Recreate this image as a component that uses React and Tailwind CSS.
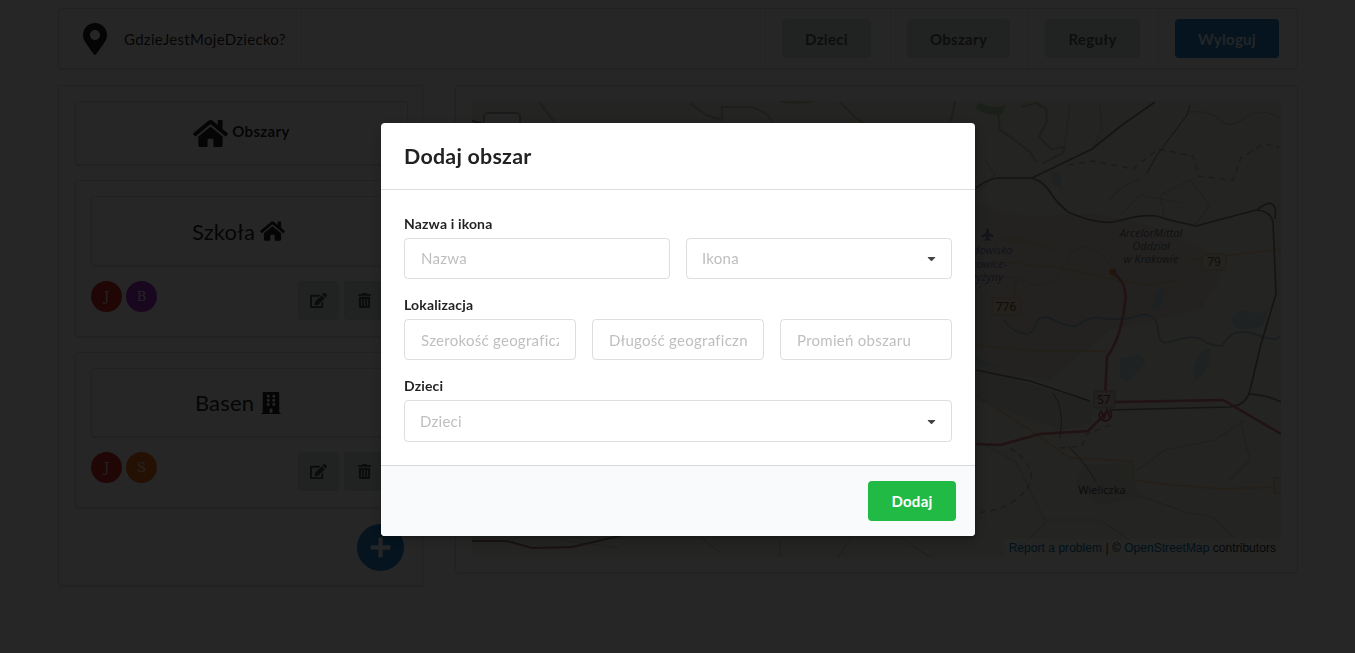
import React from "react";
import { FaMapMarkerAlt, FaBuilding, FaEdit, FaTrashAlt, FaPlus, FaPlane, FaCaretDown } from "react-icons/fa";

const segment = "border border-[#22242626] rounded-[4px] shadow-[0_1px_2px_0_#22242626] bg-white";

function HomeIcon({ className }) {
  return (
    <svg viewBox="0 0 576 512" fill="currentColor" className={className}>
      <path d="M488 312.7V456c0 13.3-10.7 24-24 24H348c-6.6 0-12-5.4-12-12V356c0-6.6-5.4-12-12-12h-72c-6.6 0-12 5.4-12 12v112c0 6.6-5.4 12-12 12H112c-13.3 0-24-10.7-24-24V312.7c0-3.6 1.6-7 4.4-9.3l188-154.8c4.4-3.6 10.8-3.6 15.3 0l188 154.8c2.7 2.3 4.3 5.7 4.3 9.3zm83.6-60.9L488 182.9V44.4c0-6.6-5.4-12-12-12h-56c-6.6 0-12 5.4-12 12V117l-89.5-73.7c-17.7-14.6-43.3-14.6-61 0L4.4 251.8c-5.1 4.2-5.8 11.8-1.6 16.9l25.5 31c4.2 5.1 11.8 5.8 16.9 1.6l235.2-193.7c4.4-3.6 10.8-3.6 15.3 0l235.2 193.7c5.1 4.2 12.7 3.5 16.9-1.6l25.5-31c4.2-5.2 3.4-12.7-1.7-16.9z" />
    </svg>
  );
}

function NavItem({ width, buttonWidth, label, primary }) {
  return (
    <div className={`flex items-center border-l border-[#2224261a] pl-4 ${width}`}>
      <button
        className={`h-[39px] rounded-[4px] pt-px text-[15px] font-bold tracking-[0.3px] ${buttonWidth} ${
          primary ? "bg-[#2185d0] text-white/90" : "bg-[#dce1e0] text-black/60"
        }`}
      >
        {label}
      </button>
    </div>
  );
}

function Avatar({ letter, color }) {
  return (
    <div className={`flex size-[31px] items-center justify-center rounded-full pt-px font-['DejaVu_Serif',serif] text-[13px] text-white/85 ${color}`}>
      {letter}
    </div>
  );
}

function AreaCard({ name, icon, avatars, height, titleHeight }) {
  return (
    <div className={`${segment} ${height} p-[15px]`}>
      <div className={`${segment} ${titleHeight} flex items-center justify-center gap-[5px] pr-[6px] text-[22px] tracking-[0.15px]`}>
        <span>{name}</span>
        {icon}
      </div>
      <div className="mt-[15px] flex items-start justify-between">
        <div className="flex gap-1">
          {avatars.map((a) => (
            <Avatar key={a.letter} letter={a.letter} color={a.color} />
          ))}
        </div>
        <div className="mr-[7px] flex gap-[5px] text-black/65">
          <button className="flex h-[39px] w-[41px] items-center justify-center rounded-[4px] bg-[#dce1e0]">
            <FaEdit size={17} />
          </button>
          <button className="flex h-[39px] w-[41px] items-center justify-center rounded-[4px] bg-[#dce1e0]">
            <FaTrashAlt size={15} />
          </button>
        </div>
      </div>
    </div>
  );
}

function CityMap() {
  return (
    <svg viewBox="472 101 809 456" className="block h-[456px] w-[809px] font-['Noto_Sans',sans-serif]">
      <rect x="472" y="101" width="809" height="456" fill="#efeee6" />
      <g opacity="0.65">
        <path d="M975 200Q1010 220 1060 215T1160 230T1220 260T1200 310L1110 330L1050 380L975 370Z" fill="#e2e0dc" />
        <path d="M1085 465L1130 463L1138 498L1100 505L1075 485Z" fill="#dddcd8" />
        <path d="M976 368L1060 393L1095 402L1090 425L1062 430L976 400Z" fill="#dfdcdc" />
      </g>
      <g opacity="0.5">
        <path d="M1232 318q10-10 18-6t18 -3l-5 16q-18 8-28 2zM1155 292l10-5 -3 20-10 3zM1120 359l18-5 8 8-18 20-8-4zM1200 352l11-4 -2 18-14 16 -2-14zM976 357l24 10-22 0zM1050 170l10 5 2 14-8-4z" fill="#aad3df" />
        <path d="M1004 320q10 14 24 14 6-2 10-14 6-6 16 0t22 6q14-10 24-8t32 0q22-10 26 10 0 18 12 14 24-8 32-2t20 6q8-14 18-14t24 5 16-2" fill="none" stroke="#6fa3c0" strokeWidth="1.8" />
      </g>
      <path d="M978 102q12 8 28 3l-4 9q-14 3-26-5z" fill="#add19e" opacity="0.8" />
      <path d="M540 103l15 20 8 20M690 103l16 12 16 5V107h30l15 7 12 20M780 101q20 4 40-2M840 102l16 16 20 13M955 101l-4 20-14 12M998 114l2 16 12 8 18 14 6 10M1022 107l14-4 10 6 1 12-8 16 12 12 14 -2-2 6-20 10" fill="none" stroke="#a5c49a" strokeWidth="2.2" opacity="0.7" />
      <g fill="none" stroke="#c9cabf" strokeWidth="1.2" opacity="0.8">
        <path d="M1070 105l-6 45M1100 105l2 25-10 20M985 160l10 15-15 15M1110 200q10-15 30-20M1190 112q20-2 30 8t25 -2 35 0" />
        <path d="M976 290q25-20 50-8t40-20 45 3M1160 195l30-15 20 25-15 20-30-5zM1120 215l20-20 40 8" />
        <path d="M1135 472l30-22 50-10 30-20M1138 495l50 18 25 4 20 20M976 440l40 22 30 60-30 30M1040 520h60l30 20M1240 420l10 40-20 20" />
        <path d="M560 540l60 8M700 537l20 15M780 540v17M850 540l-12 17M900 537l30 20" />
      </g>
      <path
        d="M1000 240h25l30 10M1000 262l55 5 58 12 35 6 30-5M1190 260l91-11M976 345l60 6h70M976 395l54 35 40 28q35 1 63 4v18l40 5 50 4 50-2M1016 280l-3 30"
        fill="none"
        stroke="#ecc98a"
        strokeWidth="1.8"
        opacity="0.65"
      />
      <g fill="none" stroke="#777" strokeWidth="1.7" opacity="0.85">
        <path d="M976 188q12-10 24-10h32l60-29 30-24 33-23M1032 178q12 4 18 14t18 20q32 14 50 9 25-7 38-5 20 6 40 10l60-16q14 0 17 12l3 72-15 50-12 50q-5 12-20 13l-120 3M976 370l54 11 60 20M1258 209q20-15 17 10M1248 394q20 1 33 8" />
        <path d="M1053 393q12 15 7 45M1068 446q20 20 28 36M1190 105l-3 10-30 40-10 18" strokeWidth="1" />
      </g>
      <path d="M1068 165l25-4 40 8 25-20 35 7 5 20 35 4 8-22 22-14 16 3M1060 448l22-2 4-12 25-9M1010 448q20 12 22 32-15 30-56 33" fill="none" stroke="#a6a0a8" strokeWidth="1.5" strokeDasharray="6 5" opacity="0.7" />
      <path d="M1113 273q15 10 12 30-4 35-18 54l-2 40 6 5M976 444l24 1 40-11 48-3 18-18M1115 402l108-2 58 34" fill="none" stroke="#dc7a88" strokeWidth="2.6" />
      <path d="M472 541h35l25 7 40-1 60-14" fill="none" stroke="#a07f72" strokeWidth="2" />
      <path d="M472 121l12 3" fill="none" stroke="#777" strokeWidth="2" />
      <circle cx="1113" cy="272" r="3.5" fill="#d99050" />
      <g fontSize="11" textAnchor="middle">
        <g fontStyle="italic" fill="#777">
          <text x="1151" y="237">ArcelorMittal</text>
          <text x="1151" y="250">Oddział</text>
          <text x="1151" y="263">w Krakowie</text>
        </g>
        <g fontStyle="italic" fill="#8380ac">
          <text x="987" y="254">Lądowisko</text>
          <text x="983" y="268">Rakowice-</text>
          <text x="984" y="281">Czyżyny</text>
        </g>
        <text x="1102" y="494" fill="#555">Wieliczka</text>
      </g>
      <g fontSize="12" textAnchor="middle">
        <rect x="1202" y="254" width="24" height="16" rx="2" fill="#f0e6d0" stroke="#d8c8a4" />
        <text x="1214" y="266" fill="#70603c">79</text>
        <rect x="992" y="298" width="29" height="17" rx="2" fill="#f0e2d0" stroke="#dcc0a0" />
        <text x="1006" y="311" fill="#705030">776</text>
        <rect x="1094" y="391" width="21" height="17" rx="2" fill="#ecd8d8" stroke="#d8aaaa" />
        <text x="1104" y="404" fill="#803c48">S7</text>
        <rect x="1274" y="478" width="10" height="15" fill="#f0e6d0" stroke="#d8bd8a" />
      </g>
      <path d="M1101 410l3 8 3-8 3 8M1100 412a6 6 0 1 0 10-1" fill="none" stroke="#d06070" strokeWidth="1.8" />
      <FaPlane x="981" y="228" size={13} color="#8380ac" transform="rotate(-90 987.5 234.5)" />
      <rect x="484" y="113" width="36" height="70" rx="4" fill="#fff" stroke="#b5b4ae" strokeWidth="2" />
    </svg>
  );
}

function Field({ placeholder, className = "" }) {
  return (
    <input
      placeholder={placeholder}
      className={`h-[41px] w-full min-w-0 rounded-[4px] border border-[#22242626] px-[16px] text-[15px] tracking-[0.27px] placeholder:text-[#bfbfbf] ${className}`}
    />
  );
}

function Select({ placeholder, className }) {
  return (
    <div className={`flex items-center justify-between rounded-[4px] border border-[#22242626] pr-[13px] pl-[15px] text-[15px] tracking-[0.27px] text-[#bfbfbf] ${className}`}>
      <span>{placeholder}</span>
      <FaCaretDown size={13} className="text-[#444]" />
    </div>
  );
}

function Label({ children }) {
  return <label className="mb-[5px] block text-[14px] leading-[18px] font-bold tracking-[0.15px]">{children}</label>;
}

export default function App() {
  return (
    <div className="h-[653px] w-[1355px] overflow-hidden bg-white font-[Lato,sans-serif] text-[15px] text-black/87">
      <div className="ml-[58px] w-[1240px] pt-2">
        <nav className={`${segment} flex h-[61px] justify-between`}>
          <div className="flex w-[243px] items-center border-r border-[#2224261a] pl-6">
            <FaMapMarkerAlt size={32} className="-ml-[4px] w-[32px]" />
            <span className="ml-[13px] pt-px tracking-[0.3px]">GdzieJestMojeDziecko?</span>
          </div>
          <div className="flex">
            <NavItem width="w-[125px]" buttonWidth="w-[89px]" label="Dzieci" />
            <NavItem width="w-[138px]" buttonWidth="w-[103px]" label="Obszary" />
            <NavItem width="w-[130px]" buttonWidth="w-[95px]" label="Reguły" />
            <NavItem width="w-[139px]" buttonWidth="w-[104px]" label="Wyloguj" primary />
          </div>
        </nav>
        <div className="mt-4 flex items-start gap-8">
          <aside className={`${segment} h-[501px] w-[365px] py-[15px] pr-[14px] pl-4`}>
            <div className="flex flex-col gap-[15px]">
              <div className={`${segment} flex h-[64px] items-center justify-center gap-1 font-bold`}>
                <HomeIcon className="h-[31px] w-[35px]" />
                <span className="pb-[3px] tracking-[0.35px]">Obszary</span>
              </div>
              <AreaCard
                name="Szkoła"
                height="h-[157px]"
                titleHeight="h-[70px]"
                icon={<HomeIcon className="h-[22px] w-[25px]" />}
                avatars={[
                  { letter: "J", color: "bg-[#db2828]" },
                  { letter: "B", color: "bg-[#a333c8]" },
                ]}
              />
              <AreaCard
                name="Basen"
                height="h-[156px]"
                titleHeight="h-[69px]"
                icon={<FaBuilding size={22} className="ml-px" />}
                avatars={[
                  { letter: "J", color: "bg-[#db2828]" },
                  { letter: "S", color: "bg-[#f2711c]" },
                ]}
              />
            </div>
            <div className="mt-4 flex justify-end pr-1">
              <button className="flex size-[47px] items-center justify-center rounded-full bg-[#2185d0] text-white/90">
                <FaPlus size={23} />
              </button>
            </div>
          </aside>
          <main className={`${segment} h-[488px] flex-1 px-4 pt-[15px]`}>
            <div className="relative">
              <CityMap />
              <div className="absolute right-0 bottom-0 bg-white/70 px-[5px] font-['Liberation_Sans',sans-serif] text-[12px] leading-[18px] tracking-[0.04px] text-[#333]">
                <span className="text-[#0078a8]">Report a problem</span> | © <span className="text-[#0078a8]">OpenStreetMap</span> contributors
              </div>
            </div>
          </main>
        </div>
      </div>

      <div className="fixed inset-0 flex items-start bg-black/85 pt-[123px] pl-[381px]">
        <div className="w-[594px] overflow-hidden rounded-[4px] bg-white shadow-[1px_3px_3px_0_rgba(0,0,0,0.2),1px_3px_15px_2px_rgba(0,0,0,0.2)]">
          <h2 className="flex h-[67px] items-center border-b border-[#22242626] px-[23px] text-[21.4px] font-bold tracking-[0.25px]">Dodaj obszar</h2>
          <form className="px-[23px] pt-[25px] pb-[23px]">
            <Label>Nazwa i ikona</Label>
            <div className="grid grid-cols-2 gap-4">
              <Field placeholder="Nazwa" className="pb-[2px]" />
              <Select placeholder="Ikona" className="h-[41px]" />
            </div>
            <div className="mt-[17px]">
              <Label>Lokalizacja</Label>
              <div className="grid grid-cols-3 gap-4">
                <Field placeholder="Szerokość geograficzna" className="pt-px" />
                <Field placeholder="Długość geograficzna" className="pt-px tracking-[0.2px]" />
                <Field placeholder="Promień obszaru" className="pt-px" />
              </div>
            </div>
            <div className="mt-[17px]">
              <Label>Dzieci</Label>
              <Select placeholder="Dzieci" className="h-[42px]" />
            </div>
          </form>
          <div className="flex h-[71px] justify-end border-t border-[#22242626] bg-[#f9fafb] pt-[15px] pr-[19px]">
            <button className="h-10 w-[88px] rounded-[4px] bg-[#21ba45] text-[15px] font-bold tracking-[0.25px] text-white">Dodaj</button>
          </div>
        </div>
      </div>
    </div>
  );
}
